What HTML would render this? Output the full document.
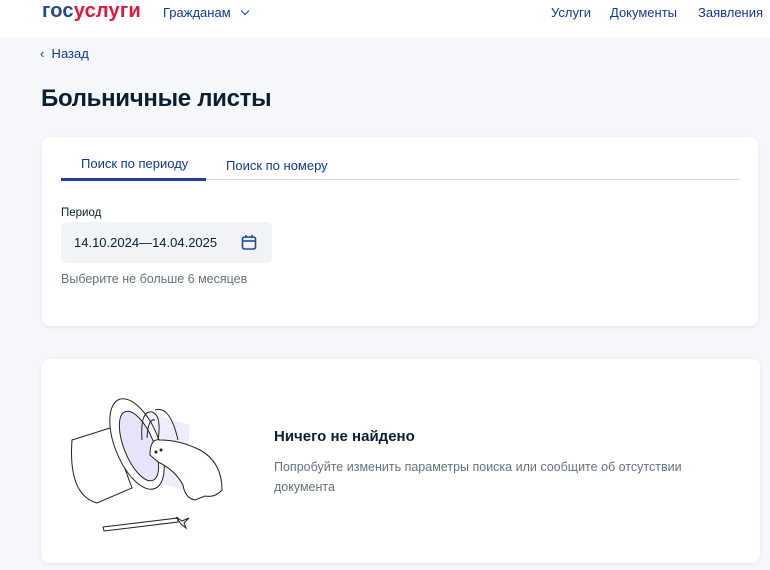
<!DOCTYPE html>
<html><head><meta charset="utf-8"><style>
*{margin:0;padding:0;box-sizing:border-box}
body{width:770px;height:570px;overflow:hidden;background:#f5f7fb;font-family:"Liberation Sans",sans-serif;color:#0b1f33;position:relative}
.hdr{position:absolute;left:0;top:0;width:770px;height:37px;background:#fff}
.logo{position:absolute;left:42px;top:0px;font-size:20px;font-weight:bold;letter-spacing:0.2px}
.logo .b{color:#1d4a9a}.logo .r{color:#e3173b}
.nav{position:absolute;top:5px;font-size:13px;color:#0d3a9a}
.a{position:absolute;color:#0d3a9a}
.card{position:absolute;background:#fff;border-radius:8px;box-shadow:0 1px 4px rgba(0,20,80,0.08)}
</style></head><body>
<div class="hdr">
<div class="logo"><span class="b">гос</span><span class="r">услуги</span></div>
<div class="nav" style="left:163px">Гражданам <span style="display:inline-block;width:6px;height:6px;border-right:1.6px solid #0d3a9a;border-bottom:1.6px solid #0d3a9a;transform:rotate(45deg);margin-left:8px;position:relative;top:-3px"></span></div>
<div class="nav" style="left:551px">Услуги</div>
<div class="nav" style="left:610px">Документы</div>
<div class="nav" style="left:698px">Заявления</div>
</div>
<div class="a" style="left:40px;top:46px;font-size:13px">‹&nbsp; Назад</div>
<div style="position:absolute;left:41px;top:85px;font-size:24px;font-weight:bold;letter-spacing:-0.3px">Больничные листы</div>
<div class="card" style="left:42px;top:137px;width:716px;height:189px">
 <div style="position:absolute;left:19px;top:42px;width:679px;height:1px;background:#d0d6e6"></div>
 <div style="position:absolute;left:19px;top:41px;width:145px;height:3px;background:#1d3fa0"></div>
 <div class="a" style="left:39px;top:19px;font-size:13px">Поиск по периоду</div>
 <div class="a" style="left:184px;top:21px;font-size:13px">Поиск по номеру</div>
 <div style="position:absolute;left:19px;top:70px;font-size:11.5px">Период</div>
 <div style="position:absolute;left:19px;top:85px;width:211px;height:41px;background:#f1f3f7;border-radius:6px">
  <div style="position:absolute;left:13px;top:13px;font-size:13px">14.10.2024—14.04.2025</div>
  <svg style="position:absolute;left:180px;top:12px" width="16" height="17" viewBox="0 0 16 17"><rect x="1.5" y="3" width="13" height="12" rx="2" fill="none" stroke="#1d4a9a" stroke-width="1.6"/><line x1="1.5" y1="7" x2="14.5" y2="7" stroke="#1d4a9a" stroke-width="1.6"/><line x1="5" y1="1" x2="5" y2="4" stroke="#1d4a9a" stroke-width="1.6"/><line x1="11" y1="1" x2="11" y2="4" stroke="#1d4a9a" stroke-width="1.6"/></svg>
 </div>
 <div style="position:absolute;left:19px;top:135px;font-size:12.5px;color:#66727f">Выберите не больше 6 месяцев</div>
</div>
<div class="card" style="left:41px;top:359px;width:719px;height:204px">
 <svg style="position:absolute;left:9px;top:21px" width="200" height="160" viewBox="50 380 200 160" fill="none" stroke="#222" stroke-width="1">
  <path d="M140 410 L190 425 L185 490 L130 475Z" fill="#f0ecfb" stroke="none"/>
  <path d="M72 440 L110 428 L132 488 L97 503 Q68 495 72 440Z" fill="#fff"/>
  <ellipse cx="137" cy="444" rx="22" ry="48" transform="rotate(-22 137 444)" fill="#fff"/>
  <ellipse cx="139" cy="446" rx="15" ry="37" transform="rotate(-22 139 446)" fill="#e6e4fb"/>
  <path d="M150 455 Q150 438 160 440 Q180 440 200 450 Q222 462 222 490 Q215 498 205 496 L195 500 Q185 498 183 485 Q175 470 158 462Z" fill="#fff"/>
  <path d="M142 440 Q140 410 152 412 Q162 415 158 440 M147 438 Q148 418 155 420"/>
  <path d="M155 410 Q170 405 178 440"/>
  <circle cx="156" cy="452" r="1" fill="#222"/><circle cx="161" cy="450" r="1" fill="#222"/>
  <path d="M103 527 L178 518 L178 522 L104 531Z"/>
  <path d="M176 517 L182 521 L189 518 L184 523 L186 528 L181 524Z"/>
 </svg>
 <div style="position:absolute;left:233px;top:69px;font-size:15px;font-weight:bold">Ничего не найдено</div>
 <div style="position:absolute;left:233px;top:98px;width:440px;font-size:12.5px;line-height:20px;color:#66727f">Попробуйте изменить параметры поиска или сообщите об отсутствии документа</div>
</div>
</body></html>
